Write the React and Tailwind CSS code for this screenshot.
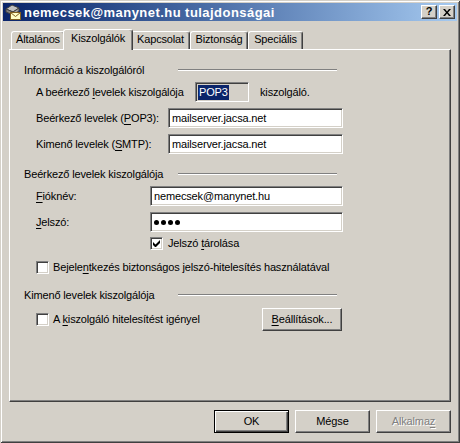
import React from 'react';

// Klasyczne ramki Windows 2000
const raised = 'border border-t-white border-l-white border-r-[#404040] border-b-[#404040] shadow-[inset_-1px_-1px_#808080]';
const sunken = 'border border-t-[#808080] border-l-[#808080] border-r-white border-b-white shadow-[inset_1px_1px_#404040,inset_-1px_-1px_#D4D0C8]';

const U = ({ children }) => <span className="underline underline-offset-[2px] decoration-1">{children}</span>;

const TitleIcon = () => (
  <svg width="16" height="16" viewBox="0 0 16 16">
    <polygon points="1,5 7,1 14,4 8,8" fill="#c0c0c0" stroke="#404040" strokeWidth="1" />
    <polygon points="1,5 8,8 8,11 1,8" fill="#808080" stroke="#404040" strokeWidth="1" />
    <polygon points="8,8 14,4 14,7 8,11" fill="#a0a0a0" stroke="#404040" strokeWidth="1" />
    <rect x="5.5" y="8.5" width="10" height="7" fill="#ffffc8" stroke="#806020" />
    <polyline points="5.5,8.5 10.5,12.5 15.5,8.5" fill="none" stroke="#806020" />
  </svg>
);

const TitleButton = ({ children }) => (
  <div className={`w-[16px] h-[14px] bg-[#D4D0C8] ${raised} flex items-center justify-center`}>
    {children}
  </div>
);

const Tab = ({ label, width, active }) => (
  <div
    className={`${active ? 'h-[21px] -mb-px -mx-[2px] z-10 pt-[1px]' : 'h-[18px] pt-[1px]'} relative bg-[#D4D0C8] border-l border-t border-r border-l-white border-t-white border-r-[#404040] shadow-[inset_-1px_0_#808080] rounded-t-[3px] flex items-start justify-center`}
    style={{ width: active ? width + 4 : width }}
  >
    <span className={active ? 'mt-[2px]' : 'mt-[1px]'}>{label}</span>
  </div>
);

const GroupHeader = ({ label, mt }) => (
  <div className={`flex items-center h-[16px] ml-[14px] w-[313px] ${mt}`}>
    <span>{label}</span>
    <div className="ml-auto w-[159px] h-[2px] border-t border-t-[#808080] border-b border-b-white" />
  </div>
);

const Checkbox = ({ checked }) => (
  <div className={`w-[13px] h-[13px] bg-white ${sunken} flex items-center justify-center shrink-0`}>
    {checked && (
      <svg width="7" height="7" viewBox="0 0 7 7">
        <path d="M0 2v3l2 2h1l4-4V0L2.5 4.5z" fill="#000" />
      </svg>
    )}
  </div>
);

const Button = ({ children, def, disabled, className = '' }) => (
  <div
    className={`h-[23px] bg-[#D4D0C8] flex items-center justify-center ${
      def
        ? 'border border-black shadow-[inset_1px_1px_#fff,inset_-1px_-1px_#404040,inset_-2px_-2px_#808080]'
        : raised
    } ${disabled ? 'text-[#808080] [text-shadow:1px_1px_#fff]' : ''} ${className}`}
  >
    {children}
  </div>
);

export default function App() {
  return (
    <div className="w-[460px] h-[443px] bg-[#D4D0C8] p-[3px] shadow-[inset_1px_1px_#D4D0C8,inset_-1px_-1px_#404040,inset_2px_2px_#fff,inset_-2px_-2px_#808080] font-['Liberation_Sans',Arial,sans-serif] text-[11px] tracking-[-0.15px] text-black leading-none flex flex-col">
      {/* Pasek tytułu */}
      <div className="h-[18px] bg-linear-to-r from-[#0A246A] to-[#A6CAF0] flex items-center pl-[2px] pr-[2px]">
        <TitleIcon />
        <span className="ml-[3px] text-white font-bold text-[13px] tracking-[0.45px]">nemecsek@manynet.hu tulajdonságai</span>
        <div className="ml-auto flex gap-[2px]">
          <TitleButton><span className="font-bold text-[11px] -mt-px">?</span></TitleButton>
          <TitleButton>
            <svg width="8" height="7" viewBox="0 0 8 7">
              <path d="M0 0h2l2 2.5L6 0h2L5 3.5 8 7H6L4 4.5 2 7H0l3-3.5z" fill="#000" />
            </svg>
          </TitleButton>
        </div>
      </div>

      <div className="px-[6px] pt-[8px] flex flex-col">
        {/* Zakładki */}
        <div className="h-[20px] flex items-end pl-[2px]">
          <Tab label="Általános" width={54} />
          <Tab label="Kiszolgálók" width={66} active />
          <Tab label="Kapcsolat" width={59} />
          <Tab label="Biztonság" width={58} />
          <Tab label="Speciális" width={55} />
        </div>

        {/* Panel */}
        <div className={`h-[353px] ${raised} flex flex-col`}>
          <GroupHeader label="Információ a kiszolgálóról" mt="mt-[12px]" />

          <div className="flex items-center h-[20px] mt-[4px] ml-[26px]">
            <span className="w-[159px]">A beérkező <U>l</U>evelek kiszolgálója</span>
            <div className={`w-[54px] h-[20px] bg-[#D4D0C8] ${sunken} flex items-center pl-[2px]`}>
              <span className="bg-[#0A246A] text-white px-[1px] py-[2px]">POP3</span>
            </div>
            <span className="ml-[11px]">kiszolgáló.</span>
          </div>

          <div className="flex items-center h-[20px] mt-[6px] ml-[26px]">
            <span className="w-[132px]">Beérkező levelek (<U>P</U>OP3):</span>
            <div className={`w-[175px] h-[20px] bg-white ${sunken} flex items-center pl-[3px]`}>mailserver.jacsa.net</div>
          </div>

          <div className="flex items-center h-[20px] mt-[6px] ml-[26px]">
            <span className="w-[132px]">Kimenő levelek (<U>S</U>MTP):</span>
            <div className={`w-[175px] h-[20px] bg-white ${sunken} flex items-center pl-[3px]`}>mailserver.jacsa.net</div>
          </div>

          <GroupHeader label="Beérkező levelek kiszolgálója" mt="mt-[12px]" />

          <div className="flex items-center h-[20px] mt-[4px] ml-[26px]">
            <span className="w-[114px]"><U>F</U>ióknév:</span>
            <div className={`w-[193px] h-[20px] bg-white ${sunken} flex items-center pl-[3px]`}>nemecsek@manynet.hu</div>
          </div>

          <div className="flex items-center h-[20px] mt-[6px] ml-[26px]">
            <span className="w-[114px]"><U>J</U>elszó:</span>
            <div className={`w-[193px] h-[20px] bg-white ${sunken} flex items-center gap-[2px] pl-[3px]`}>
              <span className="w-[5px] h-[5px] rounded-full bg-black" />
              <span className="w-[5px] h-[5px] rounded-full bg-black" />
              <span className="w-[5px] h-[5px] rounded-full bg-black" />
              <span className="w-[5px] h-[5px] rounded-full bg-black" />
            </div>
          </div>

          <div className="flex items-center h-[14px] mt-[4px] ml-[140px] gap-[5px]">
            <Checkbox checked />
            <span>Jelszó <U>t</U>árolása</span>
          </div>

          <div className="flex items-center h-[14px] mt-[10px] ml-[26px] gap-[4px]">
            <Checkbox />
            <span>Bejele<U>n</U>tkezés biztonságos jelszó-hitelesítés használatával</span>
          </div>

          <GroupHeader label="Kimenő levelek kiszolgálója" mt="mt-[13px]" />

          <div className="flex items-center h-[23px] mt-[5px] ml-[26px]">
            <div className="flex items-center gap-[4px] w-[226px]">
              <Checkbox />
              <span>A <U>k</U>iszolgáló hitelesítést igényel</span>
            </div>
            <Button className="w-[80px]"><U>B</U>eállítások...</Button>
          </div>
        </div>

        {/* Przyciski */}
        <div className="flex justify-end gap-[6px] mt-[8px]">
          <Button def className="w-[75px]">OK</Button>
          <Button className="w-[75px]">Mégse</Button>
          <Button disabled className="w-[75px]">Alkalma<span className="underline underline-offset-[2px] decoration-1">z</span></Button>
        </div>
      </div>
    </div>
  );
}
